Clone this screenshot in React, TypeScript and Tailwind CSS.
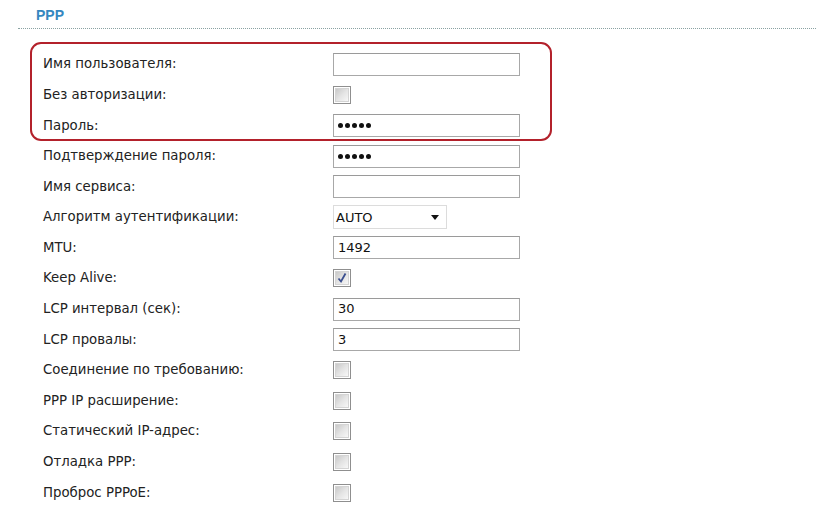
const rows: { label: string; kind: "text" | "pass" | "check" | "checked" | "select"; value?: string }[] = [
  { label: "Имя пользователя:", kind: "text" },
  { label: "Без авторизации:", kind: "check" },
  { label: "Пароль:", kind: "pass" },
  { label: "Подтверждение пароля:", kind: "pass" },
  { label: "Имя сервиса:", kind: "text" },
  { label: "Алгоритм аутентификации:", kind: "select", value: "AUTO" },
  { label: "MTU:", kind: "text", value: "1492" },
  { label: "Keep Alive:", kind: "checked" },
  { label: "LCP интервал (сек):", kind: "text", value: "30" },
  { label: "LCP провалы:", kind: "text", value: "3" },
  { label: "Соединение по требованию:", kind: "check" },
  { label: "PPP IP расширение:", kind: "check" },
  { label: "Статический IP-адрес:", kind: "check" },
  { label: "Отладка PPP:", kind: "check" },
  { label: "Проброс PPPoE:", kind: "check" },
];

function Checkbox({ checked }: { checked?: boolean }) {
  return (
    <div className="w-[18px] h-[18px] border border-[#8f8f8f] bg-white p-[1px]">
      <div className="w-full h-full border border-[#d4d4d4] bg-gradient-to-br from-[#c9c9c9] via-[#e4e4e4] to-[#f7f7f7] flex items-center justify-center">
        {checked && (
          <svg width="12" height="12" viewBox="0 0 12 12">
            <path d="M2.5 6.5 L5 9.5 L9.5 1.5" fill="none" stroke="#3b4f8f" strokeWidth="1.8" />
          </svg>
        )}
      </div>
    </div>
  );
}

function Field({ row }: { row: (typeof rows)[number] }) {
  if (row.kind === "check" || row.kind === "checked") return <Checkbox checked={row.kind === "checked"} />;
  if (row.kind === "select")
    return (
      <div className="w-[114px] h-[24px] border border-[#dcdcdc] flex items-center justify-between pl-[2px] pr-[7px] text-[13px] text-[#111]">
        <span>{row.value}</span>
        <svg width="8" height="5" viewBox="0 0 8 5">
          <path d="M0 0 H8 L4 5 Z" fill="#111" />
        </svg>
      </div>
    );
  return (
    <div className="w-[187px] h-[23px] border border-[#a8a8a8] border-t-[#9a9a9a] bg-white flex items-center px-[4px] text-[13px] text-[#111]">
      {row.kind === "pass" ? (
        <div className="flex gap-[2px] pl-[0px] pt-[1px]">
          {[0, 1, 2, 3, 4].map((i) => (
            <span key={i} className="w-[5px] h-[5px] rounded-full bg-[#111]" />
          ))}
        </div>
      ) : (
        row.value
      )}
    </div>
  );
}

export default function App() {
  return (
    <div className="w-[816px] h-[507px] bg-white overflow-hidden font-['DejaVu_Sans',Tahoma,sans-serif]">
      <div className="pl-[36px] pt-[6px] text-[14px] font-bold text-[#3587bf] leading-[18px] font-['Liberation_Sans',Arial,sans-serif]">PPP</div>
      <div className="ml-[18px] mt-[4px] border-t border-dotted border-[#8aa2a2]" />
      <div className="relative mt-[20px] pl-[43px]">
        {/* highlight frame around the login rows */}
        <div className="absolute left-[30px] top-[-7px] w-[522px] h-[99px] border-2 border-[#b3212b] rounded-[11px]" />
        {rows.map((r) => (
          <div key={r.label} className="h-[30.6px] grid grid-cols-[290px_1fr] items-center">
            <div className="text-[13.3px] text-[#222]">{r.label}</div>
            <Field row={r} />
          </div>
        ))}
      </div>
    </div>
  );
}
